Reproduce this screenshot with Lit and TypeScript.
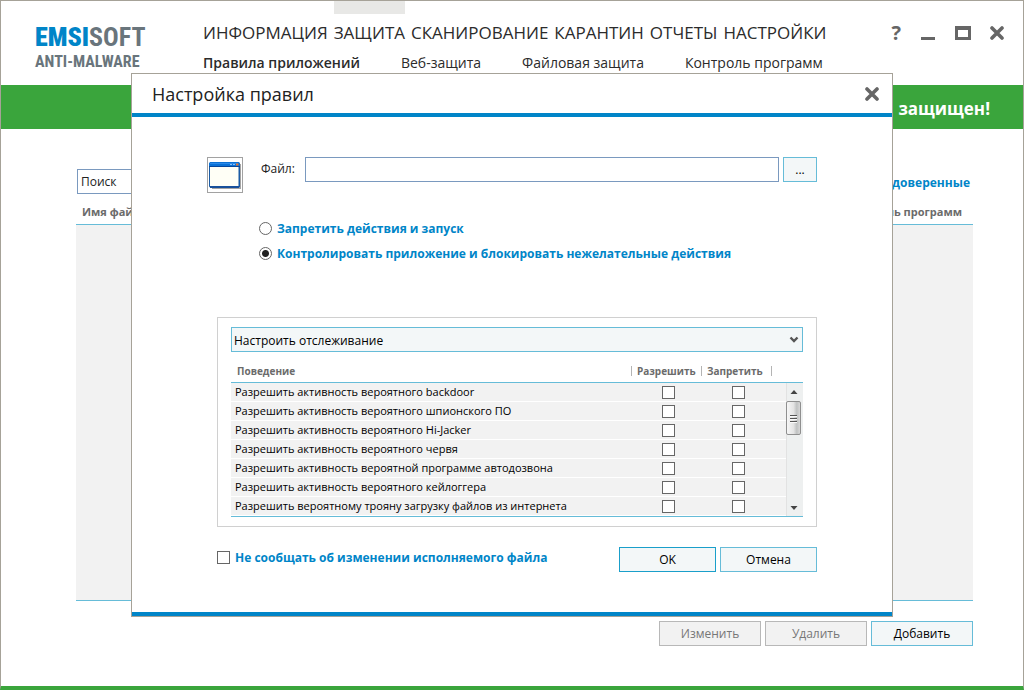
import { LitElement, html, css, svg } from "lit";
import { customElement, state } from "lit/decorators.js";
import { classMap } from "lit/directives/class-map.js";

const closeIcon = svg`<svg width="14" height="14" viewBox="0 0 14 14" aria-hidden="true">
  <path d="M2 2L12 12M12 2L2 12" fill="none" stroke="#666" stroke-width="3.6" stroke-linecap="round"/>
</svg>`;

/** Modal window for editing the monitoring rules of one application. */
@customElement("rule-dialog")
export class RuleDialog extends LitElement {
  static styles = css`
    :host {
      display: flex;
      flex-direction: column;
      box-sizing: border-box;
      width: 762px;
      max-width: 100%;
      background: #fff;
      border: 1px solid #a6a298;
      font-size: 12px;
      color: #222;
    }
    * { box-sizing: border-box; }
    button, input, select { font: inherit; color: #000; margin: 0; }
    .title {
      display: flex;
      align-items: center;
      justify-content: space-between;
      height: 43px;
      padding: 1px 13px 0 20px;
      border-bottom: 4px solid #0085c8;
    }
    h2 { margin: 0; font-size: 18px; font-weight: 400; line-height: 24px; }
    .close { display: flex; padding: 0; border: 0; background: none; }
    .body { padding: 40px 75px; border-bottom: 4px solid #0085c8; }
    .file { display: flex; align-items: flex-start; height: 36px; }
    .preview {
      display: grid;
      place-items: center;
      width: 36px;
      height: 36px;
      border: 1px solid #a2a2a2;
    }
    .file label { width: 62px; padding-left: 18px; line-height: 24px; }
    .path {
      flex: 1;
      min-width: 0;
      height: 25px;
      padding: 0 4px;
      border: 1px solid #7a99bf;
      background: #fff;
    }
    .btn {
      height: 25px;
      padding: 0;
      width: 97px;
      border: 1px solid #66bcd8;
      background: #f3f7f8;
      line-height: 20px;
    }
    .default { border-color: #1a9fca; }
    .browse { width: 34px; margin-left: 4px; }
    .modes { margin: 23px 0 51px 52px; padding: 0; border: 0; }
    .modes label, .mute {
      display: flex;
      align-items: center;
      gap: 5px;
      height: 25px;
      font-weight: 700;
      color: #0085c8;
    }
    input[type="checkbox"], input[type="radio"] {
      appearance: none;
      flex: none;
      width: 13px;
      height: 13px;
      border: 1px solid #666;
      background: #fff;
    }
    input[type="radio"] { border-radius: 50%; }
    input[type="radio"]:checked { background: radial-gradient(circle, #222 3px, #fff 4px); }
    input[type="checkbox"]:checked { background: #666; background-clip: content-box; padding: 2px; }
    .panel { margin-left: 10px; padding: 9px 13px; border: 1px solid #d0d0d0; }
    .pick { display: grid; align-items: center; }
    .pick select, .pick svg { grid-area: 1 / 1; }
    .pick svg { justify-self: end; margin-right: 4px; pointer-events: none; }
    select {
      appearance: none;
      width: 100%;
      height: 25px;
      padding: 2px 20px 0 2px;
      border: 1px solid #66bcd8;
      border-radius: 0;
      background: #f3f7f8;
    }
    .list { display: flex; border-bottom: 1px solid #66bcd8; }
    table { flex: 1; border-spacing: 0; table-layout: fixed; font-size: 11px; color: #000; }
    th {
      height: 31px;
      padding: 8px 0 0;
      border-bottom: 1px solid #66bcd8;
      font-size: 10px;
      font-weight: 700;
      color: #6b6b6b;
      text-align: left;
    }
    th span { display: block; height: 10px; line-height: 10px; padding-left: 6px; }
    th.sep span { border-left: 1px solid #b4b4b4; padding-left: 5px; }
    .check { width: 70px; }
    .rest { width: 15px; }
    td {
      height: 19px;
      padding: 0 0 0 4px;
      line-height: 18px;
      border-bottom: 1px solid #fff;
      background: #f2f2f2;
      white-space: nowrap;
    }
    td.tick { padding: 0 0 0 31px; }
    td input { display: block; }
    .bar {
      display: flex;
      flex-direction: column;
      align-items: flex-start;
      width: 17px;
      margin-top: 30px;
      border-top: 1px solid #66bcd8;
      background: linear-gradient(90deg, #e2e2e2 1px, #eef0f0 1px);
    }
    .bar svg { flex: none; }
    .thumb {
      display: grid;
      place-items: center;
      width: 15px;
      height: 34px;
      border: 1px solid #8f8f8f;
      border-radius: 2px;
      background: linear-gradient(90deg, #f6f6f6, #e4e4e4 50%, #c0c2c2 75%, #d8d8d8);
    }
    .space { flex: 1; }
    .foot { display: flex; gap: 4px; margin-top: 20px; padding-left: 10px; }
    .mute { flex: 1; height: 20px; }
  `;

  @state() private mode = "watch";

  private behaviours = [
    "Разрешить активность вероятного backdoor",
    "Разрешить активность вероятного шпионского ПО",
    "Разрешить активность вероятного Hi-Jacker",
    "Разрешить активность вероятного червя",
    "Разрешить активность вероятной программе автодозвона",
    "Разрешить активность вероятного кейлоггера",
    "Разрешить вероятному трояну загрузку файлов из интернета",
  ];

  private radio(value: string, text: string) {
    return html`<label>
      <input type="radio" name="mode" .checked=${this.mode === value} @change=${() => (this.mode = value)} />
      ${text}
    </label>`;
  }

  render() {
    return html`
      <header class="title">
        <h2>Настройка правил</h2>
        <button class="close" aria-label="Закрыть">${closeIcon}</button>
      </header>
      <div class="body">
        <div class="file">
          <span class="preview">
            <svg width="32" height="28" viewBox="0 0 32 28" aria-hidden="true">
              <path d="M3 3H32V28H3Z" fill="#a4a4a4"/>
              <rect x="0.5" y="1.5" width="30" height="25" rx="1.5" fill="#fffff6" stroke="#1c5ca4"/>
              <rect x="29.5" y="6" width="1.5" height="20" fill="#1c5ca4"/>
              <path d="M0 3Q0 1 2 1H29Q31 1 31 3V5H0Z" fill="#0b72d6"/>
              <path d="M1 2.5H29" stroke="#2c8ae8"/>
              <path d="M0 5.5H31" stroke="#07469a"/>
              <path d="M21 3.5H23M24 3.5H26" stroke="#8cc0f8"/>
              <rect x="27" y="2.5" width="2.5" height="2" fill="#e8742c"/>
              <path d="M1 25H30V27H1Z" fill="#18509a"/>
            </svg>
          </span>
          <label for="path">Файл:</label>
          <input id="path" class="path" type="text" />
          <button class="btn browse">...</button>
        </div>
        <fieldset class="modes">
          ${this.radio("deny", "Запретить действия и запуск")}
          ${this.radio("watch", "Контролировать приложение и блокировать нежелательные действия")}
        </fieldset>
        <div class="panel">
          <div class="pick">
            <select aria-labelledby="tracking">
              <option id="tracking">Настроить отслеживание</option>
            </select>
            <svg width="10" height="8" viewBox="0 0 10 8" aria-hidden="true">
              <path d="M1.5 1.5L5 5L8.5 1.5" fill="none" stroke="#555" stroke-width="2.4"/>
            </svg>
          </div>
          <div class="list">
            <table>
              <thead>
                <tr>
                  <th><span>Поведение</span></th>
                  <th class="check sep" id="allow"><span>Разрешить</span></th>
                  <th class="check sep" id="deny"><span>Запретить</span></th>
                  <th class="rest sep"><span></span></th>
                </tr>
              </thead>
              <tbody>
                ${this.behaviours.map(
                  (text, i) => html`<tr>
                    <td id="row${i}">${text}</td>
                    <td class="tick"><input type="checkbox" aria-labelledby="row${i} allow" /></td>
                    <td class="tick"><input type="checkbox" aria-labelledby="row${i} deny" /></td>
                    <td></td>
                  </tr>`
                )}
              </tbody>
            </table>
            <div class="bar" aria-hidden="true">
              <svg width="15" height="18"><path d="M4.5 11L8 7L11.5 11Z" fill="#444"/></svg>
              <span class="thumb">
                <svg width="7" height="9" viewBox="0 0 7 9">
                  <path d="M0 1.5H7M0 4.5H7M0 7.5H7" stroke="#555"/>
                  <path d="M0 2.5H7M0 5.5H7M0 8.5H7" stroke="#fafafa"/>
                </svg>
              </span>
              <span class="space"></span>
              <svg width="15" height="18"><path d="M4.5 8L8 12L11.5 8Z" fill="#444"/></svg>
            </div>
          </div>
        </div>
        <div class="foot">
          <label class="mute"><input type="checkbox" />Не сообщать об изменении исполняемого файла</label>
          <button class="btn default">OK</button>
          <button class="btn">Отмена</button>
        </div>
      </div>
    `;
  }
}

@customElement("app-root")
export class AppRoot extends LitElement {
  static styles = css`
    :host {
      display: block;
      font-family: "Open Sans", "Noto Sans", "Segoe UI", sans-serif;
      font-size: 12px;
      color: #2b2b2b;
    }
    * { box-sizing: border-box; }
    button, input { font: inherit; margin: 0; }
    a { color: inherit; text-decoration: none; }
    .window {
      position: relative;
      display: flex;
      flex-direction: column;
      min-height: 100vh;
      background: #fff;
      border: 1px solid #a6a298;
      border-bottom: 4px solid #3aa53c;
    }
    .top { display: flex; height: 84px; padding-right: 19px; }
    .logo {
      width: 202px;
      padding: 21px 0 0 34px;
      font-family: "Roboto Condensed", "Liberation Sans Narrow", sans-serif;
      font-weight: 700;
      font-size: 26px;
      line-height: 30px;
      color: #69757c;
    }
    .logo b { color: #0085c8; }
    .logo small { display: block; font-size: 16px; line-height: 20px; }
    .menus { flex: 1; white-space: nowrap; }
    .main, .sub { display: flex; }
    .main { gap: 6px; font-size: 17px; line-height: 24px; }
    .main a::before { content: ""; display: block; height: 13px; margin-bottom: 7px; }
    .main .on::before { background: #e8e8e6; }
    .sub { gap: 41px; font-size: 14px; line-height: 20px; margin-top: 8px; }
    .sub .on { font-weight: 600; }
    .controls { display: flex; gap: 19px; padding-top: 20px; height: 44px; align-items: center; }
    .controls button {
      display: flex;
      padding: 0;
      border: 0;
      background: none;
      font-size: 20px;
      font-weight: 700;
      line-height: 24px;
      color: #666;
    }
    .status {
      display: flex;
      align-items: center;
      justify-content: flex-end;
      height: 44px;
      padding: 2px 33px 0 0;
      background: #3aa53c;
      color: #fff;
      font-size: 17px;
      font-weight: 700;
    }
    .content {
      flex: 1;
      display: flex;
      flex-direction: column;
      padding: 40px 50px 40px 75px;
    }
    .tools, .head { display: flex; justify-content: space-between; align-items: center; }
    .search { width: 200px; height: 25px; margin-left: 1px; padding: 0 3px; border: 1px solid #7a99bf; }
    .search::placeholder { color: #222; opacity: 1; }
    .trusted { padding: 1px 3px 0 0; color: #0085c8; font-weight: 700; }
    .head {
      height: 30px;
      padding: 5px 11px 0 6px;
      font-size: 11px;
      font-weight: 700;
      color: #6b6b6b;
    }
    .rows {
      flex: 1;
      border: solid #66bcd8;
      border-width: 1px 0;
      background: #f2f2f2;
    }
    .actions { display: flex; justify-content: flex-end; gap: 4px; margin-top: 20px; }
    .actions button {
      width: 102px;
      height: 25px;
      padding: 0;
      border: 1px solid #66bcd8;
      background: #f3f7f8;
      color: #000;
    }
    .actions button:disabled { border-color: #b8b8b8; background: #f2f2f2; color: #777; }
    .layer { position: absolute; inset: 0 0 -3px; display: grid; place-items: center; }
  `;

  private menu = ["ИНФОРМАЦИЯ", "ЗАЩИТА", "СКАНИРОВАНИЕ", "КАРАНТИН", "ОТЧЕТЫ", "НАСТРОЙКИ"];
  private tabs = ["Правила приложений", "Веб-защита", "Файловая защита", "Контроль программ"];

  private links(items: string[], active: number) {
    return items.map((text, i) => html`<a href="#" class=${classMap({ on: i === active })}>${text}</a>`);
  }

  render() {
    return html`
      <div class="window">
        <header class="top">
          <div class="logo"><b>EMSI</b>SOFT<small>ANTI-MALWARE</small></div>
          <div class="menus">
            <nav class="main">${this.links(this.menu, 1)}</nav>
            <nav class="sub">${this.links(this.tabs, 0)}</nav>
          </div>
          <div class="controls">
            <button>?</button>
            <button aria-label="Свернуть">
              <svg width="16" height="14" aria-hidden="true"><path d="M1 12.5H15" stroke="#666" stroke-width="3"/></svg>
            </button>
            <button aria-label="Развернуть">
              <svg width="16" height="14" aria-hidden="true">
                <path d="M0 0H16V14H0ZM3 4V11H13V4Z" fill="#666" fill-rule="evenodd"/>
              </svg>
            </button>
            <button aria-label="Закрыть">${closeIcon}</button>
          </div>
        </header>
        <div class="status">защищен!</div>
        <main class="content">
          <div class="tools">
            <input class="search" type="text" placeholder="Поиск" aria-label="Поиск" />
            <a class="trusted" href="#">доверенные</a>
          </div>
          <div class="head"><span>Имя файла</span><span>Контроль программ</span></div>
          <div class="rows"></div>
          <div class="actions">
            <button disabled>Изменить</button>
            <button disabled>Удалить</button>
            <button>Добавить</button>
          </div>
        </main>
        <div class="layer"><rule-dialog role="dialog" aria-label="Настройка правил"></rule-dialog></div>
      </div>
    `;
  }
}
